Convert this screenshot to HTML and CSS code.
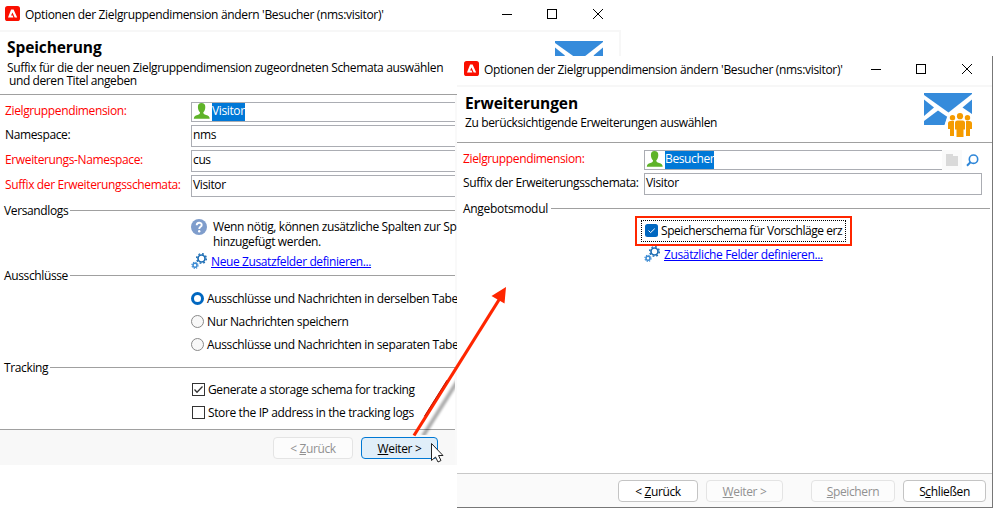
FILE: index.html
```html
<!DOCTYPE html>
<html lang="de">
<head>
<meta charset="utf-8">
<title>Optionen der Zielgruppendimension</title>
<link rel="stylesheet" href="styles.css">
</head>
<body>
<svg class="defs" width="0" height="0">
  <symbol id="logo" viewBox="0 0 15 15"><rect width="15" height="15" rx="2.600" fill="#fa0f00"/><path d="M6.100 3.600h2.500l3.600 8H9.700L7.500 6.600 6 9.600h1.600l.8 2H3z" fill="#fff"/></symbol>
  <symbol id="person" viewBox="0 0 18 16"><path d="M8.500 0C11 0 12.300 1.600 12.300 4c0 2.600-.9 4.300-2 5.300 0 1.800.7 2.200 2.800 2.700 2.400.6 3.400 1.700 3.600 3.700H.8c.2-2 1.200-3.100 3.600-3.700 2.100-.5 2.600-.9 2.600-2.700C5.900 8.300 4.900 6.600 4.900 4 4.900 1.600 6.100 0 8.500 0z" fill="#5fb329"/></symbol>
  <symbol id="gears" viewBox="0 0 16 16"><circle cx="10.500" cy="5.500" r="3.500" fill="none" stroke="#1f6fb5" stroke-width="1.700"/><circle cx="10.500" cy="5.500" r="4.800" fill="none" stroke="#1f6fb5" stroke-width="1.500" stroke-dasharray="1.800 1.970"/><circle cx="4" cy="12.300" r="2" fill="none" stroke="#3b8ad3" stroke-width="1.500"/><circle cx="4" cy="12.300" r="3.100" fill="none" stroke="#3b8ad3" stroke-width="1.100" stroke-dasharray="1.300 1.135"/></symbol>
  <symbol id="mail" viewBox="0 0 49 45"><path d="M0 0h48v1L24.500 19.500 0 2z" fill="#358bdb"/><path d="M0 6.500 10 14.500 0 23zM48 6.500 38.500 14.500 48 21z" fill="#358bdb"/><path d="M0 28 14 17.500l9.500 6.500-3 8H0z" fill="#358bdb"/></symbol>
  <symbol id="controls" viewBox="0 0 104 12"><path d="M0 6.500h10" stroke="#000"/><rect x="45.500" y="1.500" width="9" height="9" fill="none" stroke="#000"/><path d="M91 1l10 10M101 1L91 11" stroke="#000" stroke-width="1"/></symbol>
</svg>

<main class="desktop">
  <section class="window storage">
    <header class="titlebar"><svg class="logo"><use href="#logo"/></svg><span class="caption">Optionen der Zielgruppendimension ändern 'Besucher (nms:visitor)'</span><svg class="controls"><use href="#controls"/></svg></header>
    <div class="banner">
      <div><h1>Speicherung</h1><p>Suffix für die der neuen Zielgruppendimension zugeordneten Schemata auswählen<br><span class="indent">und deren Titel angeben</span></p></div>
      <svg class="mail"><use href="#mail"/></svg>
    </div>
    <div class="content">
      <div class="form">
        <div class="row pick"><label class="req">Zielgruppendimension:</label><div class="input"><svg class="person"><use href="#person"/></svg><mark>Visitor</mark></div></div>
        <div class="row"><label>Namespace:</label><div class="input">nms</div></div>
        <div class="row"><label class="req">Erweiterungs-Namespace:</label><div class="input">cus</div></div>
        <div class="row"><label class="req">Suffix der Erweiterungsschemata:</label><div class="input">Visitor</div></div>
      </div>
      <h2 class="group">Versandlogs</h2>
      <div class="help"><svg width="17" height="17" viewBox="0 0 17 17"><circle cx="8" cy="8" r="8" fill="#7f9dcc"/><path d="M5.700 6.200C5.700 2.900 10.700 3 10.700 5.900 10.700 7.900 8.200 7.800 8.200 10" fill="none" stroke="#fff" stroke-width="1.900"/><circle cx="8.200" cy="12.300" r="1.200" fill="#fff"/></svg><p>Wenn nötig, können zusätzliche Spalten zur Sp<br>hinzugefügt werden.</p></div>
      <div class="linkrow"><svg class="gears"><use href="#gears"/></svg><a>Neue Zusatzfelder definieren...</a></div>
      <h2 class="group second">Ausschlüsse</h2>
      <div class="options">
        <div class="option"><i class="radio on"></i>Ausschlüsse und Nachrichten in derselben Tabe</div>
        <div class="option"><i class="radio"></i>Nur Nachrichten speichern</div>
        <div class="option"><i class="radio"></i>Ausschlüsse und Nachrichten in separaten Tabe</div>
      </div>
      <h2 class="group third">Tracking</h2>
      <div class="options checks">
        <div class="option"><svg class="check" viewBox="0 0 13 13"><rect x=".5" y=".5" width="12" height="12" fill="#fff" stroke="#333"/><path d="M2.500 6.500 5 9.200 10.500 3.500" fill="none" stroke="#333" stroke-width="1.300"/></svg>Generate a storage schema for tracking</div>
        <div class="option"><svg class="check" viewBox="0 0 13 13"><rect x=".5" y=".5" width="12" height="12" fill="#fff" stroke="#333"/></svg>Store the IP address in the tracking logs</div>
      </div>
      <footer class="footer"><button class="back" disabled><span>&lt; <u>Z</u>urück</span></button><button class="next focus"><span><u>W</u>eiter &gt;</span></button></footer>
    </div>
  </section>

  <section class="window extensions">
    <header class="titlebar"><svg class="logo"><use href="#logo"/></svg><span class="caption">Optionen der Zielgruppendimension ändern 'Besucher (nms:visitor)'</span><svg class="controls"><use href="#controls"/></svg></header>
    <div class="banner">
      <div><h1>Erweiterungen</h1><p>Zu berücksichtigende Erweiterungen auswählen</p></div>
      <svg class="mail" viewBox="0 0 49 45"><use href="#mail" width="49" height="45"/><path d="M20.500 33 23 24l5-4 8-3 8 2.500 5 4V33z" fill="#fff"/><g fill="#f59b00"><circle cx="28.500" cy="24.800" r="2.700"/><circle cx="43.500" cy="24.800" r="2.700"/><path d="M24 30.500q0-2.500 2.500-2.500h3.500v15h-4v-7h-2zM48 30.500q0-2.500-2.500-2.500H42v15h4v-7h2z"/><circle cx="36" cy="23.200" r="3.100"/><path d="M31 30q0-2.500 2.500-2.500h5q2.500 0 2.500 2.500v6.500h-1.500V44h-7v-7.500H31z"/></g></svg>
    </div>
    <div class="form">
      <div class="row pick"><label class="req">Zielgruppendimension:</label><div class="input"><svg class="person"><use href="#person"/></svg><mark>Besucher</mark></div><span class="folder"><svg width="12" height="12" viewBox="0 0 12 12"><path d="M0 0h7v2h5v10H0z" fill="#d9d9d9"/></svg></span><svg class="search" width="13" height="13" viewBox="0 0 13 13"><circle cx="7.500" cy="5.200" r="4.200" fill="none" stroke="#2e86d8" stroke-width="1.600"/><path d="M4.400 8.300 1 11.700" stroke="#2e86d8" stroke-width="2"/></svg></div>
      <div class="row"><label>Suffix der Erweiterungsschemata:</label><div class="input">Visitor</div></div>
    </div>
    <h2 class="group">Angebotsmodul</h2>
    <div class="highlight"><div class="focusbox"><svg width="13" height="13" viewBox="0 0 13 13"><rect width="13" height="13" rx="2.500" fill="#0067c0"/><path d="M3.500 6.500 5.600 8.600 9.700 4.700" fill="none" stroke="#fff"/></svg>Speicherschema für Vorschläge erz</div></div>
    <div class="linkrow"><svg class="gears"><use href="#gears"/></svg><a>Zusätzliche Felder definieren...</a></div>
    <footer class="footer"><button class="back"><span>&lt; <u>Z</u>urück</span></button><button class="next" disabled><span><u>W</u>eiter &gt;</span></button><button class="save" disabled><span><u>S</u>peichern</span></button><button class="close"><span>S<u>c</u>hließen</span></button></footer>
  </section>

  <svg class="arrow" width="130" height="200" viewBox="400 270 130 200">
    <defs><filter id="soft" x="-20%" width="140%"><feGaussianBlur stdDeviation="1.200"/></filter><clipPath id="left"><path d="M400 360h55v75h-55z"/></clipPath></defs>
    <g clip-path="url(#left)"><path d="M423 436 462 374" stroke="#000" stroke-opacity=".32" stroke-width="4" filter="url(#soft)"/></g>
    <path d="M414 435.500 499.500 299" stroke="#ff2600" stroke-width="3.200"/>
    <path d="M424.400 416.200 447 380.200" stroke="#c41500" stroke-width="1"/>
    <path d="M506 287 491.500 296 504.500 303.500z" fill="#ff2600"/>
    <path d="M431.500 443.500v17l4-3.500 2.500 5 3-1.500-2.500-5h4.500z" fill="#fff" stroke="#222" stroke-width="1"/>
  </svg>
</main>
</body>
</html>
```
FILE: styles.css
```css
* { box-sizing: border-box; }
body { margin: 0; background: #fff; color: #000; font: 12px/15px "Open Sans", "Noto Sans", sans-serif; letter-spacing: -0.37px; }
h1, h2, p { margin: 0; font-weight: 400; font-size: 12px; }
svg { display: block; flex: none; }
.defs { position: absolute; }
.desktop { position: relative; width: 993px; height: 508px; overflow: hidden; }
.window { position: absolute; background: #fff; white-space: nowrap; }
.storage { left: 0; top: 0; width: 621px; height: 465px; }
.extensions { left: 457px; top: 56px; width: 536px; height: 452px; border-right: 1px solid #777; border-bottom: 1px solid #777; display: flex; flex-direction: column; }

.titlebar { height: 32px; border-bottom: 2px solid #f7f7f7; display: flex; padding: 6px 0 0 5px; }
.logo { width: 15px; height: 15px; margin-right: 5px; }
.caption { width: 477px; margin-top: 1px; letter-spacing: -0.33px; }
.controls { width: 104px; height: 12px; margin-top: 2px; }
.extensions .titlebar { height: 31px; padding: 5px 0 0 7px; }
.extensions .caption { width: 387px; }

.banner { display: flex; justify-content: space-between; height: 63px; border-bottom: 1px solid #a0a0a0; padding: 6px 0 0 7px; }
.storage .banner { border-right: 2px solid #f7f7f7; padding-right: 15px; }
.banner h1 { font-weight: 700; font-size: 15.5px; line-height: 18px; letter-spacing: -0.1px; }
.banner p { line-height: 13px; margin-top: 5px; letter-spacing: -0.36px; }
.indent { padding-left: 2px; letter-spacing: -0.4px; }
.mail { width: 49px; height: 45px; margin-top: 3px; }
.extensions .banner { height: 56px; padding: 7px 19px 0 8px; }
.extensions .banner p { margin-top: 4px; }
.extensions .mail { margin-top: -1px; }

.content { width: 457px; border-right: 2px solid #f9f9f9; }
.form { padding-top: 7px; }
.row { display: flex; height: 22px; margin-bottom: 3px; }
.row.pick { height: 20px; }
.row label { width: 186px; line-height: 20px; }
.pick label { line-height: 18px; }
.req { color: #f00; }
.content .row { padding-left: 5px; }
.input { flex: 1; border: 1px solid #abadb3; padding-left: 1px; line-height: 18px; }
.content .input { border-right: 0; }
.pick .input { display: flex; }
.person { width: 18px; height: 16px; }
mark { background: #0078d7; color: #fff; height: 18px; line-height: 16px; margin-left: 1px; }
.extensions .row { padding: 0 10px 0 6px; }
.extensions .row label { width: 181px; }
.extensions .pick .input { border-right: 0; margin-right: -1px; }
.extensions .pick { padding-right: 13px; }
.folder { width: 20px; height: 20px; background: #fafafa; padding: 4px; }
.search { margin: 4px 0 0 4px; }

.group { display: flex; align-items: center; gap: 2px; height: 16px; margin: 5px 0 1px; padding-left: 4px; }
.group::after { content: ""; flex: 1; height: 1px; background: #a0a0a0; }
.second { margin: -2px 0 4px; }
.third { margin: 3px 0; }
.help { display: flex; gap: 5px; height: 34px; padding-left: 191px; }
.linkrow { display: flex; gap: 4px; height: 16px; padding-left: 191px; align-items: center; letter-spacing: -0.39px; }
.gears { width: 16px; height: 16px; }
.linkrow a { color: #00f; text-decoration: underline; text-underline-offset: 1px; }
.options { padding-left: 191px; }
.option { display: flex; align-items: center; height: 23px; gap: 3px; }
.radio { flex: none; width: 13px; height: 13px; border: 1px solid #8a8a8a; border-radius: 50%; background: #f8f8f8; }
.radio.on { border: 3px solid #0067c0; background: #fff; }
.check { width: 13px; height: 13px; }
.checks { padding-left: 192px; }

.footer { display: flex; background: #f8f8f8; border-top: 1px solid #a0a0a0; }
.content .footer { height: 36px; margin-top: 5px; padding: 7px 0 0 273px; gap: 8px; }
button { font: inherit; letter-spacing: inherit; height: 22px; padding: 0; border: 1px solid #c4c4c4; border-radius: 4px; background: #fff; color: #000; line-height: 19px; }
button:disabled { color: #919191; border-color: #e4e4e4; background: #fcfcfc; }
button u { text-underline-offset: 1px; }
.back { width: 80px; }
.next { width: 77px; }
.save { width: 84px; margin-left: 20px; }
.close { width: 83px; }
.focus { border-color: #0078d4; background: #e0eef9; }
.extensions .group { flex: none; gap: 3px; padding-left: 6px; margin: 2px 2px 0 0; letter-spacing: -0.3px; }
.highlight { width: 217px; height: 30px; border: 2px solid #ff2600; margin-left: 178px; padding: 2px 4px; }
.focusbox { display: flex; align-items: center; gap: 3px; width: 205px; height: 22px; border: 1px dotted #000; padding: 0 0 1px 3px; letter-spacing: -0.44px; }
.extensions .linkrow { padding-left: 187px; letter-spacing: -0.36px; }
.extensions .footer { margin-top: auto; height: 34px; padding: 6px 0 0 161px; gap: 8px; border-color: #c8c8c8; background: #fafafa; }

.arrow { position: absolute; left: 400px; top: 270px; }
```
